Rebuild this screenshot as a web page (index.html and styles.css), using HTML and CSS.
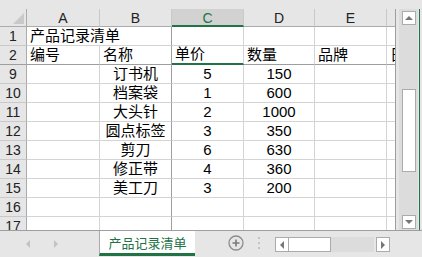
FILE: index.html
```html
<!doctype html>
<html>
	<head>
		<meta charset="utf-8">
		<title>产品记录清单</title>
		<link rel="stylesheet" href="styles.css">
	</head>
	<body>
		<div class="app">
			<div class="strip"></div>
			<div class="main">
				<div class="sheet">
					<div class="corner"><span class="tri"></span></div>
					<div class="ch">A</div>
					<div class="ch">B</div>
					<div class="ch sel">C</div>
					<div class="ch">D</div>
					<div class="ch">E</div>
					<div class="ch"></div>

					<div class="rh">1</div>
					<div class="c over">产品记录清单</div>
					<div class="c fz"></div>
					<div class="c"></div>
					<div class="c"></div>
					<div class="c"></div>
					<div class="c"></div>

					<div class="rh r2">2</div>
					<div class="c r2">编号</div>
					<div class="c r2 fz">名称</div>
					<div class="c r2 csel">单价</div>
					<div class="c r2">数量</div>
					<div class="c r2">品牌</div>
					<div class="c r2">日</div>

					<div class="rh">9</div><div class="c"></div><div class="c fz mid">订书机</div><div class="c mid">5</div><div class="c mid">150</div><div class="c"></div><div class="c"></div>
					<div class="rh">10</div><div class="c"></div><div class="c fz mid">档案袋</div><div class="c mid">1</div><div class="c mid">600</div><div class="c"></div><div class="c"></div>
					<div class="rh">11</div><div class="c"></div><div class="c fz mid">大头针</div><div class="c mid">2</div><div class="c mid">1000</div><div class="c"></div><div class="c"></div>
					<div class="rh">12</div><div class="c"></div><div class="c fz mid">圆点标签</div><div class="c mid">3</div><div class="c mid">350</div><div class="c"></div><div class="c"></div>
					<div class="rh">13</div><div class="c"></div><div class="c fz mid">剪刀</div><div class="c mid">6</div><div class="c mid">630</div><div class="c"></div><div class="c"></div>
					<div class="rh">14</div><div class="c"></div><div class="c fz mid">修正带</div><div class="c mid">4</div><div class="c mid">360</div><div class="c"></div><div class="c"></div>
					<div class="rh">15</div><div class="c"></div><div class="c fz mid">美工刀</div><div class="c mid">3</div><div class="c mid">200</div><div class="c"></div><div class="c"></div>
					<div class="rh">16</div><div class="c"></div><div class="c fz"></div><div class="c"></div><div class="c"></div><div class="c"></div><div class="c"></div>
					<div class="rh">17</div><div class="c"></div><div class="c fz"></div><div class="c"></div><div class="c"></div><div class="c"></div><div class="c"></div>
				</div>
				<div class="vscroll">
					<div class="btn"><span class="arr up"></span></div>
					<div class="vtrack">
						<div class="vthumb"></div>
					</div>
					<div class="btn"><span class="arr down"></span></div>
				</div>
				<div class="edge"></div>
			</div>
			<div class="tabs">
				<div class="nav">
					<span class="arr left light"></span>
					<span class="arr right light"></span>
				</div>
				<div class="tab">产品记录清单</div>
				<div class="add">
					<svg width="16" height="16" viewBox="0 0 16 16">
						<circle cx="8" cy="8" r="7" fill="none" stroke="#8c8c8c" stroke-width="1.3"/>
						<path d="M8 4.5v7M4.5 8h7" stroke="#7a7a7a" stroke-width="1.6"/>
					</svg>
				</div>
				<div class="dots"><i></i><i></i><i></i></div>
				<div class="hscroll">
					<div class="btn h"><span class="arr left"></span></div>
					<div class="hthumb"></div>
					<div class="htrack"></div>
					<div class="btn h"><span class="arr right"></span></div>
				</div>
			</div>
		</div>
	</body>
</html>
```

FILE: styles.css
```css
html, body {
    margin: 0;
    padding: 0;
    background: #e6e6e6;
}
.app {
    width: 422px;
    height: 257px;
    display: flex;
    flex-direction: column;
    overflow: hidden;
    font-family: "Liberation Sans", "Noto Sans CJK SC", sans-serif;
    color: #000;
}
.strip {
    height: 9px;
}
.main {
    height: 221px;
    display: flex;
}
.sheet {
    width: 396px;
    height: 221px;
    overflow: hidden;
    display: grid;
    grid-template-columns: 27px 73px 72px 72px 71px 72px 9px;
    grid-template-rows: 18px;
    grid-auto-rows: 19px;
    background: #fff;
    border-right: 1px solid #9e9e9e;
    box-sizing: border-box;
}
.corner {
    background: #e6e6e6;
    border-right: 1px solid #ababab;
    border-bottom: 1px solid #ababab;
    position: relative;
}
.corner .tri {
    position: absolute;
    right: 2px;
    bottom: 2px;
    width: 0;
    height: 0;
    border-left: 11px solid transparent;
    border-bottom: 11px solid #c9c9c9;
}
.ch {
    background: #e6e6e6;
    border-right: 1px solid #c9c9c9;
    border-bottom: 1px solid #ababab;
    font-size: 14px;
    color: #222;
    text-align: center;
    line-height: 18px;
}
.ch.sel {
    background: #d2d2d2;
    color: #217346;
    border-bottom: 2px solid #217346;
}
.rh {
    background: #e6e6e6;
    border-right: 1px solid #ababab;
    border-bottom: 1px solid #c9c9c9;
    font-size: 14px;
    color: #222;
    text-align: center;
    display: flex;
    align-items: flex-end;
    justify-content: center;
    line-height: 18px;
}
.c {
    border-right: 1px solid #d4d4d4;
    border-bottom: 1px solid #d4d4d4;
    font-size: 15px;
    line-height: 18px;
    padding-left: 3px;
    white-space: nowrap;
    display: flex;
    align-items: flex-end;
    min-width: 0;
}
.c.over {
    overflow: visible;
    position: relative;
    z-index: 1;
    border-right: 0;
}
.c.mid {
    justify-content: center;
    padding-left: 0;
}
.c.fz {
    border-right-color: #9e9e9e;
}
.r2 {
    border-bottom-color: #9e9e9e;
}
.c.csel {
    border-bottom: 2px solid #217346;
}
.vscroll {
    width: 19px;
    margin-left: 3px;
    background: #dcdcdc;
    display: flex;
    flex-direction: column;
    align-items: center;
    padding: 2px 0 1px;
    box-sizing: border-box;
}
.btn {
    width: 14px;
    height: 14px;
    background: #fff;
    border: 1px solid #ababab;
    box-sizing: border-box;
    display: flex;
    align-items: center;
    justify-content: center;
}
.vtrack {
    flex: 1;
    width: 14px;
    padding-top: 64px;
    padding-bottom: 43px;
    box-sizing: border-box;
}
.vthumb {
    height: 100%;
    background: #fff;
    border: 1px solid #ababab;
    box-sizing: border-box;
}
.edge {
    width: 1px;
    margin-left: 1px;
    background: #217346;
}
.arr {
    width: 0;
    height: 0;
}
.arr.up {
    border-left: 4px solid transparent;
    border-right: 4px solid transparent;
    border-bottom: 4px solid #777;
}
.arr.down {
    border-left: 4px solid transparent;
    border-right: 4px solid transparent;
    border-top: 4px solid #777;
}
.arr.left {
    border-top: 4px solid transparent;
    border-bottom: 4px solid transparent;
    border-right: 4px solid #777;
}
.arr.right {
    border-top: 4px solid transparent;
    border-bottom: 4px solid transparent;
    border-left: 4px solid #777;
}
.arr.light {
    border-left-color: transparent;
    border-right-color: transparent;
}
.arr.left.light {
    border-right-color: #c2c2c2;
}
.arr.right.light {
    border-left-color: #c2c2c2;
}
.tabs {
    height: 27px;
    border-top: 1px solid #9e9e9e;
    box-sizing: border-box;
    display: flex;
    align-items: flex-start;
}
.nav {
    width: 99px;
    height: 26px;
    display: flex;
    align-items: center;
    gap: 24px;
    padding-left: 26px;
    box-sizing: border-box;
}
.tab {
    width: 96px;
    height: 25px;
    background: #fff;
    border-left: 1px solid #ababab;
    border-bottom: 3px solid #217346;
    box-sizing: border-box;
    color: #217346;
    font-family: "Noto Sans CJK SC", sans-serif;
    font-size: 13px;
    text-align: center;
    line-height: 21px;
    padding-top: 1px;
}
.add {
    margin-left: 33px;
    margin-top: 4px;
    height: 16px;
}
.dots {
    margin-left: 14px;
    margin-top: 6px;
    display: flex;
    flex-direction: column;
    gap: 3px;
}
.dots i {
    width: 2px;
    height: 2px;
    background: #c4c4c4;
}
.hscroll {
    margin-left: 15px;
    margin-top: 6px;
    display: flex;
    align-items: center;
    height: 15px;
}
.btn.h {
    height: 15px;
}
.hthumb {
    width: 42px;
    height: 15px;
    background: #fff;
    border: 1px solid #ababab;
    border-left: 0;
    box-sizing: border-box;
}
.htrack {
    width: 43px;
    height: 15px;
    background: #dcdcdc;
    margin-right: 2px;
}
```
